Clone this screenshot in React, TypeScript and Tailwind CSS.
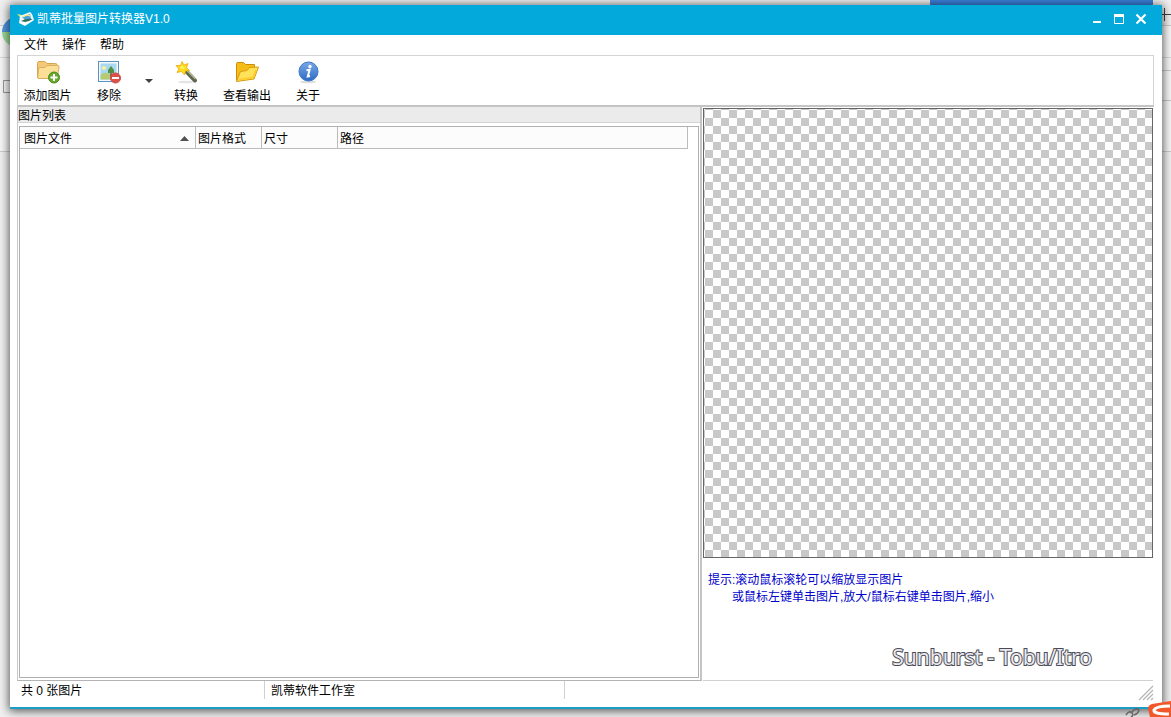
import type { ReactNode } from 'react'

interface ToolItem {
  label: string
  width: string
  icon: ReactNode
}

function AppLogo() {
  return (
    <svg width="18" height="16" viewBox="0 0 18 16">
      <path d="M0 3 L5 4 L5 8 Z" fill="#d9f06a" />
      <path d="M3 5 L13 1 L15 3 L17 9 L8 15 L2 12 Z" fill="#eefafd" />
      <path d="M5 6 L13 3 L14 8 L8 9 Z" fill="#4aa3dd" />
      <path d="M4 10 Q9 7 16 8 L12 10 L8 11 Z" fill="#2f6f5a" />
      <path d="M3 11 L8 13 L16 9" stroke="#fff" strokeWidth="1.3" fill="none" />
      <path d="M6 6 Q10 3 13 5" stroke="#ffe87a" strokeWidth="1.3" fill="none" />
    </svg>
  )
}

function AddIcon() {
  return (
    <svg width="24" height="24" viewBox="0 0 24 24">
      <path d="M1.500 17.500 V3.500 Q1.500 1.500 3 1.500 H9 L11 3.500 H19.500 Q21 3.500 21 5 V17.500 Z" fill="#f3c979" stroke="#d6a44f" />
      <path d="M2.500 9 Q2 7.500 4 7.500 H9 L11 5.500 H21.500 Q23.300 5.500 23 7 L21.500 17 Q21.300 18.500 20 18.500 H3 Q1.500 18.500 1.800 17 Z" fill="#fbdf97" stroke="#dcae5b" />
      <circle cx="18" cy="17.500" r="5.500" fill="#69a82f" stroke="#4b8a1c" />
      <path d="M18 14 V21 M14.500 17.500 H21.500" stroke="#fff" strokeWidth="2" />
    </svg>
  )
}

function RemoveIcon() {
  return (
    <svg width="24" height="24" viewBox="0 0 24 24">
      <rect x="1.500" y="1.500" width="20" height="20" fill="#f5f9fc" stroke="#5a92c0" />
      <rect x="3.500" y="3.500" width="16" height="16" fill="#a9d8f2" />
      <circle cx="7" cy="8" r="2" fill="#fff0a0" />
      <path d="M3.500 15 Q8 11 12 14 Q16 16 19.500 13 V19.500 H3.500 Z" fill="#b5ca72" />
      <path d="M14 9 V17" stroke="#77512c" strokeWidth="1.500" />
      <path d="M14 6 L17 10 L17 13 H11 V10 Z" fill="#4f9044" />
      <circle cx="18.500" cy="18" r="5" fill="#dc5149" stroke="#cf4942" />
      <path d="M15 18 H22" stroke="#fff" strokeWidth="2" />
    </svg>
  )
}

function WandIcon() {
  return (
    <svg width="24" height="24" viewBox="0 0 24 24">
      <ellipse cx="12" cy="22" rx="8" ry="1.300" fill="#e4e4e4" />
      <path d="M12 11 L21 20.500" stroke="#5c6650" strokeWidth="4" strokeLinecap="round" />
      <path d="M12 9.500 L21 18.500" stroke="#b3b78a" strokeWidth="1.500" strokeLinecap="round" />
      <path d="M8 1.500 L10 5 L14 3.500 L12.500 7.500 L15.500 10.500 L11.500 11 L10.500 15 L7.500 11.500 L3 12.500 L5 9 L2 5.500 L6.500 5.500 Z" fill="#ffdc1c" stroke="#eaa70a" strokeWidth="0.800" />
      <path d="M8 5 L9 7.500 L11 7 L9.500 9 L6 8 Z" fill="#fff380" />
    </svg>
  )
}

function FolderIcon() {
  return (
    <svg width="24" height="24" viewBox="0 0 24 24">
      <path d="M1.500 20.500 V3.500 Q1.500 2.500 3 2.500 H8.500 L10.500 4.500 H19.500 V9" fill="#f6bd18" stroke="#cf8e08" />
      <path d="M1.500 21.500 L5.500 11.500 L12 10.500 L14.500 7.500 L23.500 7 L19 19 Z" fill="#ffe259" stroke="#d79b10" strokeLinejoin="round" />
      <path d="M4 19.500 L18 17.500 L21 10" fill="none" stroke="#ffc928" strokeWidth="1.500" />
    </svg>
  )
}

function InfoIcon() {
  return (
    <svg width="24" height="24" viewBox="0 0 24 24">
      <defs>
        <linearGradient id="info" x1="0" y1="0" x2="0" y2="1">
          <stop offset="0" stopColor="#79a9e6" />
          <stop offset="1" stopColor="#2c6cc4" />
        </linearGradient>
      </defs>
      <ellipse cx="12" cy="22" rx="8" ry="1.300" fill="#dedede" />
      <circle cx="12.500" cy="11.500" r="9.500" fill="url(#info)" stroke="#3c75c4" />
      <circle cx="14" cy="6.500" r="1.700" fill="#fff" />
      <path d="M10.500 10.200 L13.600 9.800 L11.800 16.500 L14 16" fill="none" stroke="#fff" strokeWidth="2" />
    </svg>
  )
}

const menus = ['文件', '操作', '帮助']

const tools: ToolItem[] = [
  { label: '转换', width: 'w-[54px]', icon: <WandIcon /> },
  { label: '查看输出', width: 'w-[68px]', icon: <FolderIcon /> },
  { label: '关于', width: 'w-[54px]', icon: <InfoIcon /> },
]

function ToolButton({ label, width, icon }: ToolItem) {
  return (
    <button type="button" className={`${width} flex flex-col items-center whitespace-nowrap pt-1`}>
      {icon}
      <span className="mt-1 leading-4">{label}</span>
    </button>
  )
}

function TitleBar() {
  return (
    <header className="flex h-[30px] shrink-0 items-center bg-[#04a9dc] pr-[11px] pb-[3px] pl-[7px] text-white">
      <AppLogo />
      <h1 className="ml-[2px] flex-1">凯蒂批量图片转换器V1.0</h1>
      <div className="flex gap-[2px]">
        <button type="button" aria-label="最小化" className="flex w-5 justify-center">
          <svg width="12" height="12" viewBox="0 0 12 12"><path d="M2 9 H10" stroke="#fff" strokeWidth="2" /></svg>
        </button>
        <button type="button" aria-label="最大化" className="flex w-5 justify-center">
          <svg width="12" height="12" viewBox="0 0 12 12">
            <path d="M1.500 2 V10.500 H10.500 V2" fill="none" stroke="#fff" />
            <path d="M1 2.500 H11" stroke="#fff" strokeWidth="3" />
          </svg>
        </button>
        <button type="button" aria-label="关闭" className="flex w-5 justify-center">
          <svg width="12" height="12" viewBox="0 0 12 12"><path d="M1.500 1.500 L10.500 10.500 M10.500 1.500 L1.500 10.500" stroke="#fff" strokeWidth="2.200" /></svg>
        </button>
      </div>
    </header>
  )
}

function ImageList() {
  return (
    <section className="flex min-w-0 flex-1 flex-col border-r-2 border-b border-l border-r-[#c4c4c4] border-b-[#b4b4b4] border-l-[#c8c8c8]">
      <h2 className="h-4 border-b border-[#d4d4d4] bg-[#ebebeb] leading-[18px]">图片列表</h2>
      <div className="mx-px mt-[3px] mb-[2px] flex-1 border border-[#b0b0b0] pr-[10px]">
        <table className="w-full table-fixed border-separate border-spacing-0 bg-[#fcfcfc] text-left">
          <thead>
            <tr className="h-[22px] [&>th]:border-r [&>th]:border-b [&>th]:border-[#bcbcbc] [&>th]:pt-[2px] [&>th]:font-normal">
              <th className="w-[176px] pr-[6px] pl-1">
                <span className="flex items-center justify-between">
                  图片文件
                  <svg width="9" height="5" viewBox="0 0 9 5"><path d="M0 5 L4.500 0 L9 5 Z" fill="#505050" /></svg>
                </span>
              </th>
              <th className="w-[66px] pl-[2px]">图片格式</th>
              <th className="w-[76px] pl-[2px]">尺寸</th>
              <th className="pl-[2px]">路径</th>
            </tr>
          </thead>
        </table>
      </div>
    </section>
  )
}

function Preview() {
  return (
    <section className="mr-px ml-px w-[450px] shrink-0 border-b border-[#d0d0d0]">
      <div className="mt-px aspect-square w-full border border-[#666]">
        <svg className="block h-full w-full" shapeRendering="crispEdges">
          <defs>
            <pattern id="checker" x="1" y="1" width="16" height="16" patternUnits="userSpaceOnUse">
              <path d="M8 0 H16 V8 H8 Z M0 8 H8 V16 H0 Z" fill="#c8c8c8" />
            </pattern>
          </defs>
          <rect width="100%" height="100%" fill="url(#checker)" />
        </svg>
      </div>
      <div className="mt-[14px] pl-[5px] leading-[17px] text-[#0000cc]">
        <p>提示:滚动鼠标滚轮可以缩放显示图片</p>
        <p className="pl-6">或鼠标左键单击图片,放大/鼠标右键单击图片,缩小</p>
      </div>
    </section>
  )
}

// whatever peeks out from behind the window
function Desktop() {
  return (
    <div className="absolute inset-0 -z-10 overflow-hidden bg-[#f1f0f1]">
      <div className="absolute top-0 right-[18px] h-[5px] w-[223px] bg-[#3b82dc]" />
      <div className="absolute top-[25px] left-0 h-[127px] w-full border-y border-[#ccc] bg-[#f6f6f6]" />
      <div className="absolute top-[17px] left-[2px] h-[30px] w-[30px] rounded-full bg-linear-to-b from-[#4d94de] from-50% to-[#9bdc98] to-50%" />
      <div className="absolute top-[57px] left-0 h-px w-full bg-[#d8d8d8]" />
      <div className="absolute top-[70px] right-0 h-px w-3 bg-[#c8c8c8]" />
      <div className="absolute top-[100px] right-0 h-px w-3 bg-[#c8c8c8]" />
      <div className="absolute top-20 left-[3px] h-[13px] w-3 border border-[#999]" />
      <svg className="absolute top-2 right-0" width="10" height="14" viewBox="0 0 10 14">
        <path d="M0 6.500 H10 M3.500 0 V13" stroke="#444" />
      </svg>
    </div>
  )
}

export default function App() {
  return (
    <div className="relative isolate flex h-screen flex-col pt-[5px] pr-[9px] pb-2 pl-[10px] font-['Liberation_Sans','Noto_Sans_CJK_SC',sans-serif] text-xs text-black">
      <Desktop />
      <main className="flex min-h-0 flex-1 flex-col border-b-2 border-[#1c9dc6] bg-white shadow-[0_1px_9px_1px_rgba(0,0,0,0.65)]">
        <TitleBar />
        <nav className="flex h-5 shrink-0 items-center gap-[14px] pl-[14px]">
          {menus.map((menu) => (
            <button key={menu} type="button">{menu}</button>
          ))}
        </nav>
        <div className="mr-2 ml-[7px] flex min-h-0 flex-1 flex-col">
          <div className="flex h-[52px] shrink-0 border border-b-2 border-[#d4d4d4] border-b-[#c4c4c4]">
            <ToolButton label="添加图片" width="w-[59px]" icon={<AddIcon />} />
            <div className="ml-[2px] flex">
              <ToolButton label="移除" width="w-[60px]" icon={<RemoveIcon />} />
              <button type="button" aria-label="更多移除选项" className="flex w-5 items-center justify-center">
                <svg width="8" height="4" viewBox="0 0 8 4"><path d="M0 0 H8 L4 4 Z" fill="#404040" /></svg>
              </button>
            </div>
            {tools.map((tool) => (
              <ToolButton key={tool.label} {...tool} />
            ))}
          </div>
          <div className="flex min-h-0 flex-1">
            <ImageList />
            <Preview />
          </div>
        </div>
        <footer className="mr-2 ml-[7px] flex h-[26px] shrink-0 items-start leading-5">
          <span className="h-[18px] w-[248px] border-r border-[#d0d0d0] pl-1">共 0 张图片</span>
          <span className="h-[18px] w-[300px] border-r border-[#d0d0d0] pl-[6px]">凯蒂软件工作室</span>
          <svg className="mt-1 ml-auto" width="16" height="16" viewBox="0 0 16 16">
            <path d="M1 15 L15 1 M5 15 L15 5 M9 15 L15 9 M13 15 L15 13" stroke="#b4b4b4" strokeWidth="1.200" />
          </svg>
        </footer>
      </main>

      {/* desktop lyrics and input method badge float over everything */}
      <p className="absolute right-[79px] bottom-[46px] font-['Noto_Sans',sans-serif] text-[21px] leading-7 text-[#e8e8ee] [paint-order:stroke_fill] [-webkit-text-stroke:2px_#4c4c54]">
        Sunburst - Tobu/Itro
      </p>
      <svg className="absolute right-0 bottom-0" width="48" height="16" viewBox="0 0 48 16">
        <path d="M3 14 Q6 9 9 12 Q11 14 8 16 M9 11 Q13 6 16 9 Q15 13 11 14" fill="none" stroke="#666" strokeWidth="1.500" />
        <path d="M25 8 Q25 4 29 3 L48 0 V16 H27 Z" fill="#f0572b" />
        <path d="M47 5 Q33 5 31 9 Q30 13 46 13" fill="none" stroke="#fff" strokeWidth="3" />
      </svg>
    </div>
  )
}
